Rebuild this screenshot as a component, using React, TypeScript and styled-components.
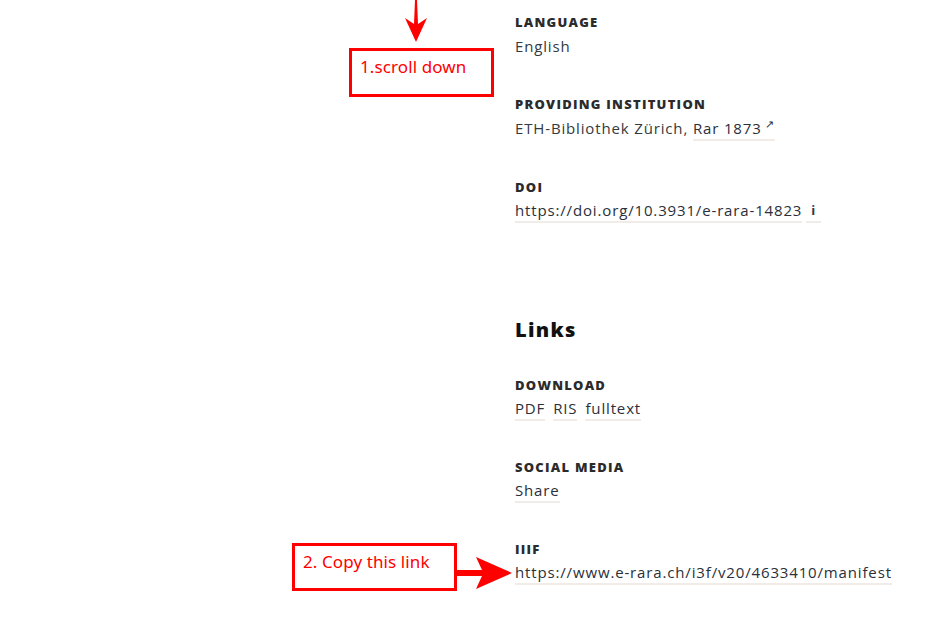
import React from "react";
import styled, { createGlobalStyle } from "styled-components";

const Global = createGlobalStyle`
  html, body { margin: 0; padding: 0; background: #ffffff; }
  body { width: 939px; height: 626px; overflow: hidden; }
`;

const Page = styled.div`
  position: relative;
  width: 939px;
  height: 626px;
  background: #fff;
  padding: 12px 0 0 515px;
  box-sizing: border-box;
  font-family: "Open Sans", "Liberation Sans", sans-serif;
  color: #333;
`;

const Column = styled.div`
  display: flex;
  flex-direction: column;
`;

const Field = styled.div<{ $gap?: number }>`
  display: flex;
  flex-direction: column;
  gap: 2px;
  margin-bottom: ${(p) => p.$gap ?? 36}px;
`;

const Label = styled.div`
  font-size: 13px;
  line-height: 20px;
  font-weight: 800;
  letter-spacing: 1.25px;
  text-transform: uppercase;
  color: #2b2b2b;
`;

const Value = styled.div`
  display: flex;
  align-items: flex-start;
  gap: 8px;
  font-size: 15px;
  line-height: 24px;
  letter-spacing: 0.85px;
  color: #333a40;
  white-space: nowrap;
`;

const Link = styled.span`
  display: inline-block;
  line-height: 22px;
  border-bottom: 2px solid #f2ece8;
  color: #2a2f3a;
`;

const Ext = styled.span`
  font-size: 11px;
  vertical-align: top;
  margin-left: 3px;
  line-height: 14px;
`;

const Info = styled.span`
  display: inline-block;
  line-height: 22px;
  border-bottom: 2px solid #f2ece8;
  font-weight: 700;
  font-size: 13px;
  padding: 0 5px;
  margin-left: -4px;
`;

const Heading = styled.h2`
  margin: 93px 0 31px 0;
  font-size: 20px;
  line-height: 28px;
  font-weight: 800;
  letter-spacing: 1.3px;
  color: #111;
`;

const Note = styled.div<{ $x: number; $y: number; $w: number; $h: number }>`
  position: absolute;
  left: ${(p) => p.$x}px;
  top: ${(p) => p.$y}px;
  width: ${(p) => p.$w}px;
  height: ${(p) => p.$h}px;
  box-sizing: border-box;
  border: 3px solid #ff0000;
  background: #fff;
  color: #ff0000;
  font-family: "Noto Sans", "Liberation Sans", sans-serif;
  font-size: 17px;
  line-height: 20px;
  padding: 6px 0 0 8px;
  letter-spacing: 0.1px;
  white-space: nowrap;
`;

const ArrowSvg = styled.svg<{ $x: number; $y: number }>`
  position: absolute;
  left: ${(p) => p.$x}px;
  top: ${(p) => p.$y}px;
  overflow: visible;
`;

export default function App() {
  return (
    <>
      <Global />
      <Page>
        <Column>
          <Field>
            <Label>Language</Label>
            <Value>English</Value>
          </Field>
          <Field>
            <Label>Providing Institution</Label>
            <Value>
              <span>
                ETH-Bibliothek Zürich,{" "}
                <Link>
                  Rar 1873<Ext>↗</Ext>
                </Link>
              </span>
            </Value>
          </Field>
          <Field $gap={0}>
            <Label>DOI</Label>
            <Value>
              <Link>https://doi.org/10.3931/e-rara-14823</Link>
              <Info>i</Info>
            </Value>
          </Field>
          <Heading>Links</Heading>
          <Field>
            <Label>Download</Label>
            <Value>
              <Link>PDF</Link>
              <Link>RIS</Link>
              <Link>fulltext</Link>
            </Value>
          </Field>
          <Field>
            <Label>Social Media</Label>
            <Value>
              <Link>Share</Link>
            </Value>
          </Field>
          <Field>
            <Label>IIIF</Label>
            <Value>
              <Link>https://www.e-rara.ch/i3f/v20/4633410/manifest</Link>
            </Value>
          </Field>
        </Column>

        <ArrowSvg $x={404} $y={0} width="24" height="44" viewBox="0 0 24 44">
          <path d="M11 0 L13 0 L14 24 L23 18 L12 42 L1 18 L10 24 Z" fill="#ff0000" />
        </ArrowSvg>
        <Note $x={349} $y={48} $w={145} $h={49}>1.scroll down</Note>

        <ArrowSvg $x={454} $y={556} width="60" height="34" viewBox="0 0 60 34">
          <path d="M0 14 L28 14 L22 1 L58 17 L22 33 L28 20 L0 20 Z" fill="#ff0000" />
        </ArrowSvg>
        <Note $x={292} $y={543} $w={165} $h={48}>2. Copy this link</Note>
      </Page>
    </>
  );
}
